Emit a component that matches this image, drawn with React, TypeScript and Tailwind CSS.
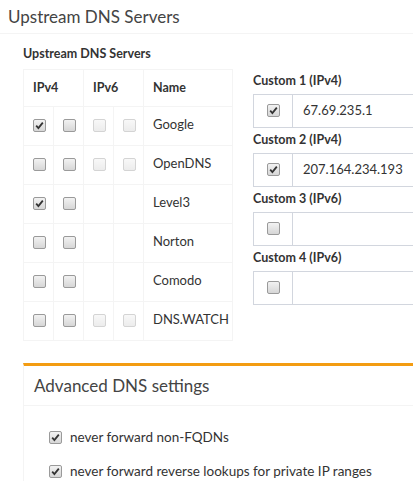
import React from "react";

type Box = { checked?: boolean; disabled?: boolean };

function Check({ checked, disabled }: Box) {
    return (
        <span
            className={`inline-flex items-center justify-center w-[13px] h-[13px] rounded-[2px] border align-middle ${
                disabled
                    ? "border-[#d4d4d4] bg-gradient-to-b from-[#f8f8f8] to-[#ececec]"
                    : "border-[#9a9a9a] bg-gradient-to-b from-[#f2f2f2] to-[#d6d6d6]"
            }`}
        >
            {checked && (
                <svg width="9" height="9" viewBox="0 0 9 9">
                    <path d="M1.2 4.6 L3.4 7 L7.8 1.6" fill="none" stroke="#333" strokeWidth="1.8" />
                </svg>
            )}
        </span>
    );
}

const servers: { name: string; v4: [boolean, boolean]; v6: boolean }[] = [
    { name: "Google", v4: [true, false], v6: true },
    { name: "OpenDNS", v4: [false, false], v6: true },
    { name: "Level3", v4: [true, false], v6: false },
    { name: "Norton", v4: [false, false], v6: false },
    { name: "Comodo", v4: [false, false], v6: false },
    { name: "DNS.WATCH", v4: [false, false], v6: true },
];

const customs = [
    { label: "Custom 1 (IPv4)", value: "67.69.235.1", checked: true },
    { label: "Custom 2 (IPv4)", value: "207.164.234.193", checked: true },
    { label: "Custom 3 (IPv6)", value: "", checked: false },
    { label: "Custom 4 (IPv6)", value: "", checked: false },
];

export default function App() {
    return (
        <div className="w-[413px] h-[489px] overflow-hidden bg-white text-[#333] font-['Lato',sans-serif]">
            {/* Box header */}
            <div className="h-[34px] border-b border-[#f4f4f4] px-2 flex items-center">
                <h3 className="text-[17px] text-[#444]">Upstream DNS Servers</h3>
            </div>

            <div className="flex pl-[23px]">
                {/* Server table */}
                <div className="w-[210px] shrink-0">
                    <div className="h-[35px] flex items-center pt-[6px] text-[12.5px] font-bold">Upstream DNS Servers</div>
                    <table className="w-[210px] border-collapse border border-[#f4f4f4] text-[13px]">
                        <thead>
                            <tr className="h-[37px]">
                                <th colSpan={2} className="border border-[#f4f4f4] text-left pl-[9px] text-[12.5px] font-bold">IPv4</th>
                                <th colSpan={2} className="border border-[#f4f4f4] text-left pl-[9px] text-[12.5px] font-bold">IPv6</th>
                                <th className="border border-[#f4f4f4] text-left pl-[9px] text-[12.5px] font-bold">Name</th>
                            </tr>
                        </thead>
                        <tbody>
                            {servers.map((s) => (
                                <tr key={s.name} className="h-[39px]">
                                    <td className="w-[30px] border border-[#f4f4f4] pl-[9px] pb-[2px]"><Check checked={s.v4[0]} /></td>
                                    <td className="w-[30px] border border-[#f4f4f4] pl-[9px] pb-[2px]"><Check checked={s.v4[1]} /></td>
                                    <td className="w-[30px] border border-[#f4f4f4] pl-[9px] pb-[2px]">{s.v6 && <Check disabled />}</td>
                                    <td className="w-[30px] border border-[#f4f4f4] pl-[9px] pb-[2px]">{s.v6 && <Check disabled />}</td>
                                    <td className="w-[89px] border border-[#f4f4f4] pl-[9px] pb-[3px]">{s.name}</td>
                                </tr>
                            ))}
                        </tbody>
                    </table>
                </div>

                {/* Custom servers */}
                <div className="ml-[20px] w-[220px] shrink-0 pt-[38px]">
                    {customs.map((c) => (
                        <div key={c.label} className="mb-[3px]">
                            <div className="h-[18px] flex items-center text-[12.5px] font-bold mb-[4px]">{c.label}</div>
                            <div className="flex h-[34px] border border-[#d2d6de]">
                                <div className="w-[39px] border-r border-[#d2d6de] flex items-center justify-center pb-[1px]">
                                    <Check checked={c.checked} />
                                </div>
                                <div className="flex items-center pl-[10px] text-[13px] pb-[1px]">{c.value}</div>
                            </div>
                        </div>
                    ))}
                </div>
            </div>

            {/* Advanced box */}
            <div className="ml-[23px] mt-[22px] border-t-[3px] border-[#f39c12] border-l border-l-[#f4f4f4]">
                <div className="h-[40px] border-b border-[#f4f4f4] flex items-center pl-[10px]">
                    <h3 className="text-[17px] text-[#444]">Advanced DNS settings</h3>
                </div>
                <div className="pl-[25px] pt-[21px] text-[13.5px]">
                    <label className="flex items-center gap-[8px] h-[20px]">
                        <Check checked />
                        <span>never forward non-FQDNs</span>
                    </label>
                    <label className="flex items-center gap-[8px] h-[20px] mt-[14px]">
                        <Check checked />
                        <span>never forward reverse lookups for private IP ranges</span>
                    </label>
                </div>
            </div>
        </div>
    );
}
